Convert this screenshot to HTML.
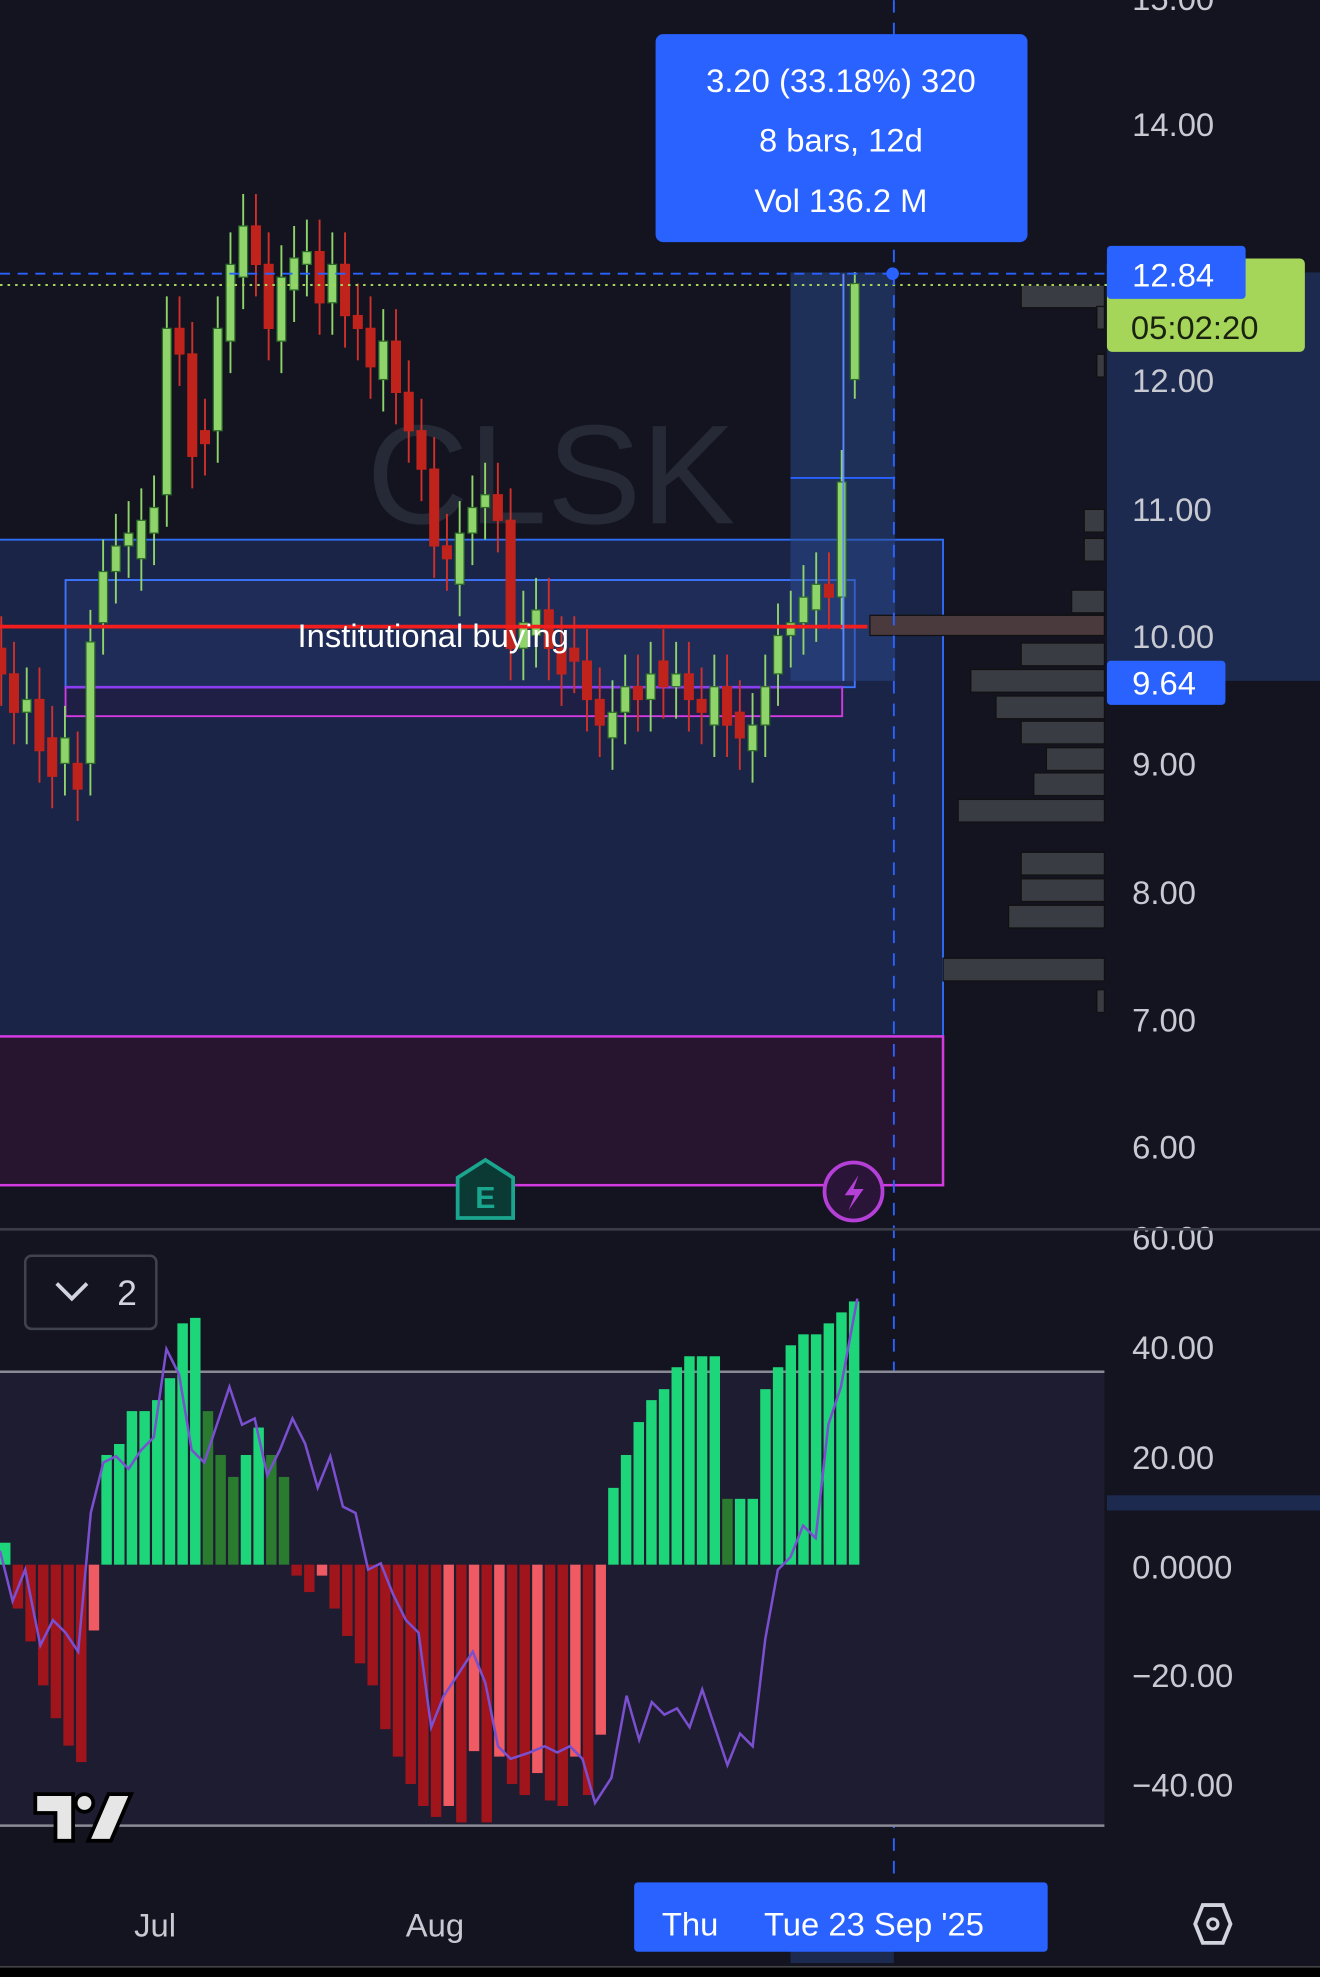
<!DOCTYPE html>
<html><head><meta charset="utf-8"><style>
html,body{margin:0;padding:0;background:#131420;overflow:hidden}
svg{display:block}
text{font-family:"Liberation Sans",sans-serif}
</style></head><body>
<svg id="s" width="1320" height="1977" viewBox="0 0 1047 1568" xmlns="http://www.w3.org/2000/svg">
<rect width="1047" height="1568" fill="#131420"/>
<rect x="878" y="216" width="169" height="324" fill="#1c2a50"/>
<rect x="-2" y="428" width="750" height="394" fill="#1a2446" stroke="#2f6df5" stroke-width="1.5"/>
<rect x="-2" y="822" width="750" height="118" fill="#27142f" stroke="#d13be0" stroke-width="2"/>
<rect x="52" y="460" width="626" height="85" fill="#1f2c58" stroke="#3d74ff" stroke-width="1.5"/>
<rect x="52" y="545" width="616" height="23" fill="#1f1f45" stroke="#d13be0" stroke-width="1.5"/>
<line x1="52" y1="545" x2="668" y2="545" stroke="#8b3df0" stroke-width="2"/>
<rect x="627" y="216" width="83" height="324" fill="#2a4a90" opacity="0.5"/>
<line x1="627" y1="379" x2="710" y2="379" stroke="#2962ff" stroke-width="1.5"/>
<text x="437" y="415" font-size="112" fill="#262a36" text-anchor="middle">CLSK</text>
<g id="vp" fill="#3a3c44" stroke="#111" stroke-width="1"></g>
<g id="candles"></g>
<line x1="0" y1="497" x2="688" y2="497" stroke="#f21d1d" stroke-width="3"/>
<text x="236" y="513" font-size="26" fill="#fff">Institutional buying</text>
<line x1="0" y1="217" x2="878" y2="217" stroke="#2962ff" stroke-width="1.5" stroke-dasharray="8,6"/>
<line x1="0" y1="226" x2="878" y2="226" stroke="#a5d65a" stroke-width="1.5" stroke-dasharray="2,4"/>
<line x1="709" y1="0" x2="709" y2="1490" stroke="#2962ff" stroke-width="1.5" stroke-dasharray="10,8"/>
<circle cx="708" cy="217" r="5" fill="#2962ff"/>
<line x1="669" y1="217" x2="669" y2="540" stroke="#5a86ff" stroke-width="1.5"/>
<rect x="520" y="27" width="295" height="165" rx="6" fill="#2962ff"/>
<text x="667" y="73" font-size="26" fill="#fff" text-anchor="middle">3.20 (33.18%) 320</text>
<text x="667" y="120" font-size="26" fill="#fff" text-anchor="middle">8 bars, 12d</text>
<text x="667" y="168" font-size="26" fill="#fff" text-anchor="middle">Vol 136.2 M</text>
<g font-size="26" fill="#c8cad2">
<text x="898" y="8">15.00</text>
<text x="898" y="108">14.00</text>
<text x="898" y="311">12.00</text>
<text x="898" y="413">11.00</text>
<text x="898" y="514">10.00</text>
<text x="898" y="615">9.00</text>
<text x="898" y="717">8.00</text>
<text x="898" y="818">7.00</text>
<text x="898" y="919">6.00</text>
<text x="898" y="991">60.00</text>
<text x="898" y="1078">40.00</text>
<text x="898" y="1165">20.00</text>
<text x="898" y="1252">0.0000</text>
<text x="898" y="1338">−20.00</text>
<text x="898" y="1425">−40.00</text>
</g>
<rect x="878" y="205" width="157" height="74" rx="4" fill="#a5d65a"/>
<text x="897" y="269" font-size="26" fill="#1a2210">05:02:20</text>
<rect x="878" y="195" width="110" height="42" rx="3" fill="#2962ff"/>
<text x="898" y="227" font-size="26" fill="#fff">12.84</text>
<rect x="878" y="524" width="94" height="35" rx="3" fill="#2962ff"/>
<text x="898" y="551" font-size="26" fill="#fff">9.64</text>
<path d="M385 920 L407 934 L407 966 L363 966 L363 934 Z" fill="#0b3a34" stroke="#1aa58f" stroke-width="3"/>
<text x="385" y="958" font-size="24" font-weight="bold" fill="#1aa58f" text-anchor="middle">E</text>
<circle cx="677" cy="945" r="23" fill="#2a1437" stroke="#b540d8" stroke-width="3"/>
<path d="M681 932 L670 948 L678 948 L673 960 L685 943 L677 943 Z" fill="#b540d8"/>
<line x1="0" y1="975" x2="1047" y2="975" stroke="#3a3c48" stroke-width="2"/>
<rect x="0" y="1088" width="876" height="360" fill="#1e1c30"/>
<line x1="0" y1="1088" x2="876" y2="1088" stroke="#8a8a96" stroke-width="2"/>
<line x1="0" y1="1448" x2="876" y2="1448" stroke="#8a8a96" stroke-width="2"/>
<rect x="878" y="1186" width="169" height="12" fill="#1c2a50"/>
<g id="hist"></g>
<polyline id="pl" fill="none" stroke="#7a4fd0" stroke-width="2"/>
<rect x="20" y="996" width="104" height="58" rx="5" fill="#131420" stroke="#40424e" stroke-width="2"/>
<path d="M45 1018 L57 1030 L69 1018" fill="none" stroke="#d1d4dc" stroke-width="3"/>
<text x="93" y="1035" font-size="28" fill="#d1d4dc">2</text>
<g fill="#e6e6e6" stroke="#000" stroke-width="3">
<path d="M28 1423 H58 V1460 H44 V1438 H28 Z"/>
<circle cx="67" cy="1430" r="7"/>
<path d="M86 1423 H104 L88 1460 H70 Z"/>
</g>
<text x="123" y="1536" font-size="26" fill="#c8cad2" text-anchor="middle">Jul</text>
<text x="345" y="1536" font-size="26" fill="#c8cad2" text-anchor="middle">Aug</text>
<rect x="627" y="1545" width="82" height="12" fill="#1c2a50"/>
<rect x="503" y="1493" width="328" height="55" rx="3" fill="#2962ff"/>
<text x="525" y="1535" font-size="26" fill="#fff">Thu</text>
<text x="606" y="1535" font-size="26" fill="#fff">Tue 23 Sep '25</text>
<path d="M954 1511 H970 L976 1526 L970 1541 H954 L948 1526 Z" fill="none" stroke="#d1d4dc" stroke-width="3"/>
<circle cx="962" cy="1526" r="4" fill="none" stroke="#d1d4dc" stroke-width="2.5"/>
<rect x="0" y="1560" width="1047" height="8" fill="#000"/>
<line x1="0" y1="1560" x2="1047" y2="1560" stroke="#555" stroke-width="1"/>
</svg>
<script>
var NS="http://www.w3.org/2000/svg";
function el(p,t,a){var e=document.createElementNS(NS,t);for(var k in a)e.setAttribute(k,a[k]);p.appendChild(e);return e;}
function Y(p){return 504-(p-10)*101.5;}
var vp=document.getElementById('vp');
[[226,810],[243,870],[281,870],[404,860],[427,860],[468,850],[490,690],[510,810],[531,770],[552,790],[572,810],[593,830],[613,820],[634,760],[676,810],[697,810],[718,800],[760,748],[785,870]].forEach(function(b){el(vp,'rect',{x:b[1],y:b[0]+(b[1]==690?-2:0),width:876-b[1],height:b[1]==690?16:18,fill:b[1]==690?'#4a3a3e':'#3a3c44'});});
var c=[9.7,9.4,9.5,9.1,8.9,9.2,8.8,9.95,10.5,10.7,10.8,10.9,11.0,12.4,12.2,11.4,11.5,12.4,12.9,13.2,12.9,12.4,12.8,12.95,13.0,12.6,12.9,12.5,12.4,12.1,12.3,11.9,11.6,11.3,10.7,10.6,10.8,11.0,11.1,10.9,9.9,10.1,10.2,9.9,9.7,9.8,9.5,9.3,9.4,9.6,9.5,9.7,9.6,9.7,9.5,9.4,9.6,9.3,9.2,9.3,9.6,10.0,10.1,10.3,10.4,10.3,11.2,12.75];
var o=[9.9,9.7,9.4,9.5,9.2,9.0,9.0,9.0,10.1,10.5,10.7,10.6,10.8,11.1,12.4,12.2,11.6,11.6,12.3,12.8,13.2,12.9,12.3,12.7,12.9,13.0,12.6,12.9,12.5,12.4,12.0,12.3,11.9,11.6,11.3,10.7,10.4,10.8,11.0,11.1,10.9,9.9,10.0,10.2,9.9,9.9,9.8,9.5,9.2,9.4,9.6,9.5,9.8,9.6,9.7,9.5,9.3,9.6,9.4,9.1,9.3,9.7,10.0,10.1,10.2,10.4,10.3,12.0];
var g=document.getElementById('candles');
for(var i=0;i<c.length;i++){var x=i*10.1+1;if(i==c.length-1)x=678;var up=c[i]>=o[i];var col=up?'#8fd46a':'#d2302a';
var hi=Math.max(c[i],o[i])+0.25,lo=Math.min(c[i],o[i])-0.25;if(i==c.length-1){hi=12.84;lo=11.85;}
el(g,'line',{x1:x,x2:x,y1:Y(hi),y2:Y(lo),stroke:col,'stroke-width':1.5});
var t=Y(Math.max(c[i],o[i])),b=Y(Math.min(c[i],o[i]));if(b-t<2)b=t+2;
el(g,'rect',{x:x-3.5,y:t,width:7,height:b-t,fill:up?'#8fd46a':'#c0221c',stroke:up?'#2f6b2a':'#c0221c','stroke-width':1});}
var h=[4,-8,-14,-22,-28,-33,-36,-12,20,22,28,28,30,34,44,45,28,20,16,20,25,20,16,-2,-5,-2,-8,-13,-18,-22,-30,-35,-40,-44,-46,-44,-47,-34,-47,-35,-40,-42,-38,-43,-44,-35,-42,-31,-25,-35,-20,-20,-14,-20,-22,-14,-20,-17,-15,-20,-19,-15,-13,-15,-12,-9,-7,-6];
h=h.slice(0,48).concat([14,20,26,30,32,36,38,38,38,12,12,12,32,36,40,42,42,44,46,48]);
var hg=document.getElementById('hist');
for(var i=0;i<h.length;i++){var x=i*10.05;var v=h[i];var pv=i?h[i-1]:0;var col;
if(v>=0)col=(v>=pv?'#1ed67a':'#2a7a2f');else col=(v<=pv?'#a0141c':'#f05a62');
var y0=1241,y1=1241-v*4.35;el(hg,'rect',{x:x,y:Math.min(y0,y1),width:8.3,height:Math.abs(y1-y0)||1,fill:col});}
var pts=[[0,1230],[10,1270],[20,1245],[32,1305],[42,1285],[52,1295],[62,1310],[72,1200],[82,1160],[92,1155],[102,1165],[112,1150],[122,1140],[132,1070],[142,1090],[152,1150],[162,1160],[172,1130],[182,1100],[192,1130],[202,1125],[212,1170],[222,1150],[232,1125],[242,1145],[252,1180],[262,1155],[272,1195],[282,1200],[292,1245],[302,1240],[312,1265],[322,1285],[332,1295],[342,1370],[352,1345],[362,1330],[375,1310],[385,1335],[395,1385],[405,1395],[420,1390],[432,1385],[442,1390],[452,1385],[462,1395],[472,1430],[485,1410],[497,1345],[507,1380],[517,1350],[527,1360],[537,1355],[547,1370],[557,1340],[567,1370],[577,1400],[587,1375],[597,1385],[607,1300],[617,1245],[627,1235],[637,1210],[647,1220],[657,1130],[667,1100],[680,1030]];
document.getElementById('pl').setAttribute('points',pts.map(function(p){return p.join(',')}).join(' '));
</script>
</body></html>
